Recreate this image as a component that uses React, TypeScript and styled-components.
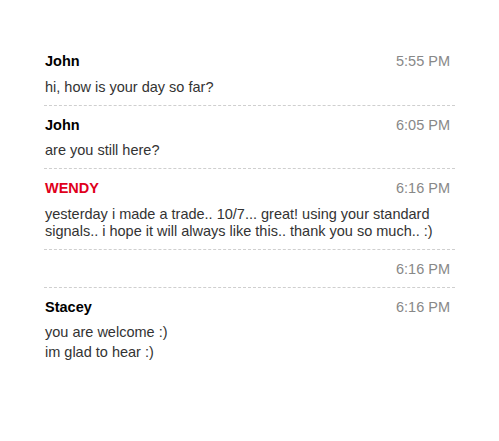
import React from "react";
import styled, { createGlobalStyle } from "styled-components";

const Global = createGlobalStyle`
  html, body { margin: 0; padding: 0; background: #fff; }
  body { font-family: "Liberation Sans", Arial, sans-serif; }
`;

const Feed = styled.div`
  width: 411px;
  margin: 42px 0 0 44px;
  display: flex;
  flex-direction: column;
`;

const Item = styled.div`
  padding: 10px 0 9px 1px;
  border-bottom: 1px dashed #cfcfcf;
  &:last-child { border-bottom: none; }
`;

const Header = styled.div`
  display: flex;
  justify-content: space-between;
  align-items: baseline;
  height: 18px;
  line-height: 18px;
  font-size: 14.5px;
`;

const Name = styled.span<{ $accent?: boolean }>`
  font-weight: bold;
  color: ${(p) => (p.$accent ? "#e0001b" : "#000")};
`;

const Time = styled.span`
  color: #888;
  padding-right: 5px;
`;

const Body = styled.div`
  margin-top: 8.5px;
  display: flex;
  flex-direction: column;
  gap: 3px;
`;

const Line = styled.div`
  font-size: 14.5px;
  line-height: 17px;
  color: #333;
`;

type Msg = { name?: string; accent?: boolean; time: string; lines: string[] };

const messages: Msg[] = [
  { name: "John", time: "5:55 PM", lines: ["hi, how is your day so far?"] },
  { name: "John", time: "6:05 PM", lines: ["are you still here?"] },
  {
    name: "WENDY",
    accent: true,
    time: "6:16 PM",
    lines: [
      "yesterday i made a trade.. 10/7... great! using your standard signals.. i hope it will always like this.. thank you so much.. :)",
    ],
  },
  { time: "6:16 PM", lines: [] },
  { name: "Stacey", time: "6:16 PM", lines: ["you are welcome :)", "im glad to hear :)"] },
];

export default function App() {
  return (
    <>
      <Global />
      <Feed>
        {messages.map((m, i) => (
          <Item key={i}>
            <Header>
              <Name $accent={m.accent}>{m.name ?? ""}</Name>
              <Time>{m.time}</Time>
            </Header>
            {m.lines.length > 0 && (
              <Body>
                {m.lines.map((l, j) => (
                  <Line key={j}>{l}</Line>
                ))}
              </Body>
            )}
          </Item>
        ))}
      </Feed>
    </>
  );
}
